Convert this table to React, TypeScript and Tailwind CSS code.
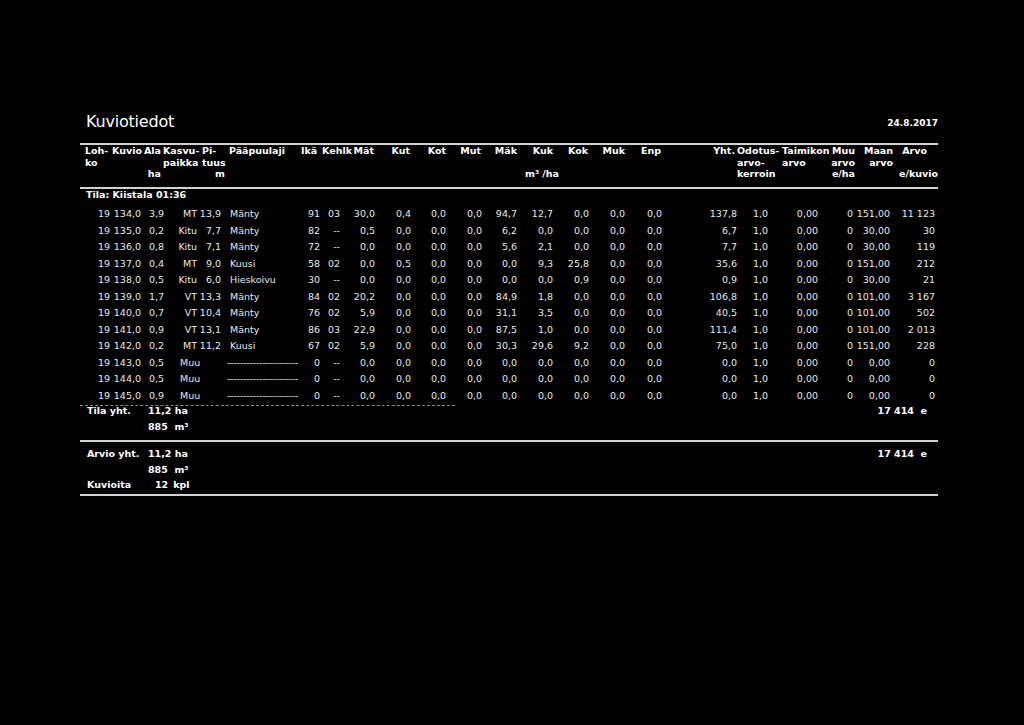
import React from 'react'

// column widths and alignment for the data rows
const cols = [
  'w-[30px] text-right',
  'w-[31px] text-right',
  'w-[23px] text-right',
  'w-[33px] text-right',
  'w-[24px] text-right',
  'w-[79px] text-left pl-[9px]',
  'w-[20px] text-right',
  'w-[20px] text-right',
  'w-[35px] text-right',
  'w-[36px] text-right',
  'w-[35px] text-right',
  'w-[36px] text-right',
  'w-[35px] text-right',
  'w-[36px] text-right',
  'w-[36px] text-right',
  'w-[36px] text-right',
  'w-[37px] text-right',
  'w-[75px] text-right',
  'w-[31px] text-right',
  'w-[50px] text-right',
  'w-[35px] text-right',
  'w-[37px] text-right',
  'w-[45px] text-right',
]

const zeros = ['0,0', '0,0', '0,0', '0,0', '0,0', '0,0', '0,0', '0,0', '0,0']
const dashes = '----------------------'

const rows: string[][] = [
  ['19', '134,0', '3,9', 'MT', '13,9', 'Mänty', '91', '03', '30,0', '0,4', '0,0', '0,0', '94,7', '12,7', '0,0', '0,0', '0,0', '137,8', '1,0', '0,00', '0', '151,00', '11 123'],
  ['19', '135,0', '0,2', 'Kitu', '7,7', 'Mänty', '82', '--', '0,5', '0,0', '0,0', '0,0', '6,2', '0,0', '0,0', '0,0', '0,0', '6,7', '1,0', '0,00', '0', '30,00', '30'],
  ['19', '136,0', '0,8', 'Kitu', '7,1', 'Mänty', '72', '--', '0,0', '0,0', '0,0', '0,0', '5,6', '2,1', '0,0', '0,0', '0,0', '7,7', '1,0', '0,00', '0', '30,00', '119'],
  ['19', '137,0', '0,4', 'MT', '9,0', 'Kuusi', '58', '02', '0,0', '0,5', '0,0', '0,0', '0,0', '9,3', '25,8', '0,0', '0,0', '35,6', '1,0', '0,00', '0', '151,00', '212'],
  ['19', '138,0', '0,5', 'Kitu', '6,0', 'Hieskoivu', '30', '--', '0,0', '0,0', '0,0', '0,0', '0,0', '0,0', '0,9', '0,0', '0,0', '0,9', '1,0', '0,00', '0', '30,00', '21'],
  ['19', '139,0', '1,7', 'VT', '13,3', 'Mänty', '84', '02', '20,2', '0,0', '0,0', '0,0', '84,9', '1,8', '0,0', '0,0', '0,0', '106,8', '1,0', '0,00', '0', '101,00', '3 167'],
  ['19', '140,0', '0,7', 'VT', '10,4', 'Mänty', '76', '02', '5,9', '0,0', '0,0', '0,0', '31,1', '3,5', '0,0', '0,0', '0,0', '40,5', '1,0', '0,00', '0', '101,00', '502'],
  ['19', '141,0', '0,9', 'VT', '13,1', 'Mänty', '86', '03', '22,9', '0,0', '0,0', '0,0', '87,5', '1,0', '0,0', '0,0', '0,0', '111,4', '1,0', '0,00', '0', '101,00', '2 013'],
  ['19', '142,0', '0,2', 'MT', '11,2', 'Kuusi', '67', '02', '5,9', '0,0', '0,0', '0,0', '30,3', '29,6', '9,2', '0,0', '0,0', '75,0', '1,0', '0,00', '0', '151,00', '228'],
  ['19', '143,0', '0,5', 'Muu', '', dashes, '0', '--', ...zeros, '0,0', '1,0', '0,00', '0', '0,00', '0'],
  ['19', '144,0', '0,5', 'Muu', '', dashes, '0', '--', ...zeros, '0,0', '1,0', '0,00', '0', '0,00', '0'],
  ['19', '145,0', '0,9', 'Muu', '', dashes, '0', '--', ...zeros, '0,0', '1,0', '0,00', '0', '0,00', '0'],
]

function Rule() {
  return <div className="h-[2px] w-full bg-[#d2d2d2]" />
}

function Lines({ className, lines }: { className: string; lines: string[] }) {
  return (
    <div className={className}>
      {lines.map((l, i) => (
        <div key={i}>{l || '\u00a0'}</div>
      ))}
    </div>
  )
}

export default function App() {
  return (
    <div className="min-h-screen w-full bg-black text-white font-['DejaVu_Sans',sans-serif]">
      <div className="ml-[80px] w-[858px] pt-[112px]">
        {/* title */}
        <div className="flex h-[20px] items-center justify-between">
          <h1 className="pl-[6px] text-[16px] leading-[20px] tracking-[-0.2px]">Kuviotiedot</h1>
          <span className="pt-[3px] text-[9px] font-bold">24.8.2017</span>
        </div>

        <div className="mt-[11px]">
          <Rule />
        </div>

        {/* column headers */}
        <div className="flex whitespace-nowrap text-[9.5px] font-bold leading-[11.5px]">
          <Lines className="w-[32px] pl-[5px]" lines={['Loh-', 'ko']} />
          <Lines className="w-[31px]" lines={['Kuvio']} />
          <Lines className="w-[18px] text-right" lines={['Ala', '', 'ha']} />
          <Lines className="w-[40px] pl-[2px]" lines={['Kasvu-', 'paikka']} />
          <div className="w-[25px] pl-[1px]">
            <div>Pi-</div>
            <div>tuus</div>
            <div className="pr-[1px] text-right">m</div>
          </div>
          <Lines className="w-[74px] pl-[3px]" lines={['Pääpuulaji']} />
          <Lines className="w-[21px] pl-[1px]" lines={['Ikä']} />
          <Lines className="w-[32px] pl-[1px]" lines={['Kehlk']} />
          <Lines className="w-[21px] text-right" lines={['Mät']} />
          <Lines className="w-[36px] text-right" lines={['Kut']} />
          <Lines className="w-[36px] text-right" lines={['Kot']} />
          <Lines className="w-[35px] text-right" lines={['Mut']} />
          <Lines className="w-[36px] text-right" lines={['Mäk']} />
          <div className="w-[36px] text-right">
            <div>Kuk</div>
            <div>&nbsp;</div>
            <div className="-mr-[6px]">m³ /ha</div>
          </div>
          <Lines className="w-[35px] text-right" lines={['Kok']} />
          <Lines className="w-[37px] text-right" lines={['Muk']} />
          <Lines className="w-[36px] text-right" lines={['Enp']} />
          <Lines className="w-[74px] text-right" lines={['Yht.']} />
          <Lines className="w-[46px] pl-[2px]" lines={['Odotus-', 'arvo-', 'kerroin']} />
          <Lines className="w-[49px] pl-[1px]" lines={['Taimikon', 'arvo']} />
          <Lines className="w-[25px] text-right" lines={['Muu', 'arvo', 'e/ha']} />
          <Lines className="w-[38px] text-right" lines={['Maan', 'arvo']} />
          <div className="w-[45px] text-right">
            <div className="pr-[11px]">Arvo</div>
            <div>&nbsp;</div>
            <div>e/kuvio</div>
          </div>
        </div>

        <div className="mt-[7px]">
          <Rule />
        </div>

        <div className="h-[12px] pl-[6px] text-[9.5px] font-bold leading-[12px]">Tila: Kiistala 01:36</div>

        {/* data rows */}
        <div className="mt-[5.5px] text-[9.5px] text-[#e8e8e8]">
          {rows.map((r, i) => (
            <div key={i} className="flex h-[16.55px] items-center whitespace-nowrap leading-[16.55px]">
              {r.map((v, j) => {
                let cls = cols[j]
                if (j === 3 && v === 'Muu') cls = 'w-[33px] text-left pl-[16px]'
                if (j === 5 && v === dashes) cls = 'w-[79px] text-left pl-[6px] tracking-[-0.2px] overflow-hidden'
                return (
                  <div key={j} className={cls}>
                    {v}
                  </div>
                )
              })}
            </div>
          ))}
        </div>

        <div className="w-[375px] border-t border-dashed border-[#8a8a8a]" />

        {/* totals */}
        <div className="text-[9.5px] font-bold">
          <div className="flex h-[12px] items-center">
            <div className="w-[68px] pl-[7px]">Tila yht.</div>
            <div>11,2 ha</div>
            <div className="flex-1 pr-[11px] text-right">17 414&nbsp; e</div>
          </div>
          <div className="mt-[4px] flex h-[12px] items-center">
            <div className="w-[68px]" />
            <div>885&nbsp;&nbsp;m³</div>
          </div>
        </div>

        <div className="mt-[6px]">
          <Rule />
        </div>

        <div className="text-[9.5px] font-bold">
          <div className="mt-[7px] flex h-[12px] items-center">
            <div className="w-[68px] pl-[7px]">Arvio yht.</div>
            <div>11,2 ha</div>
            <div className="flex-1 pr-[11px] text-right">17 414&nbsp; e</div>
          </div>
          <div className="mt-[3.5px] flex h-[12px] items-center">
            <div className="w-[68px]" />
            <div>885&nbsp;&nbsp;m³</div>
          </div>
          <div className="mt-[3.5px] flex h-[12px] items-center">
            <div className="w-[68px] pl-[7px]">Kuvioita</div>
            <div className="pl-[7px]">12</div>
            <div className="pl-[5px]">kpl</div>
          </div>
        </div>

        <div className="mt-[2px]">
          <Rule />
        </div>
      </div>
    </div>
  )
}
